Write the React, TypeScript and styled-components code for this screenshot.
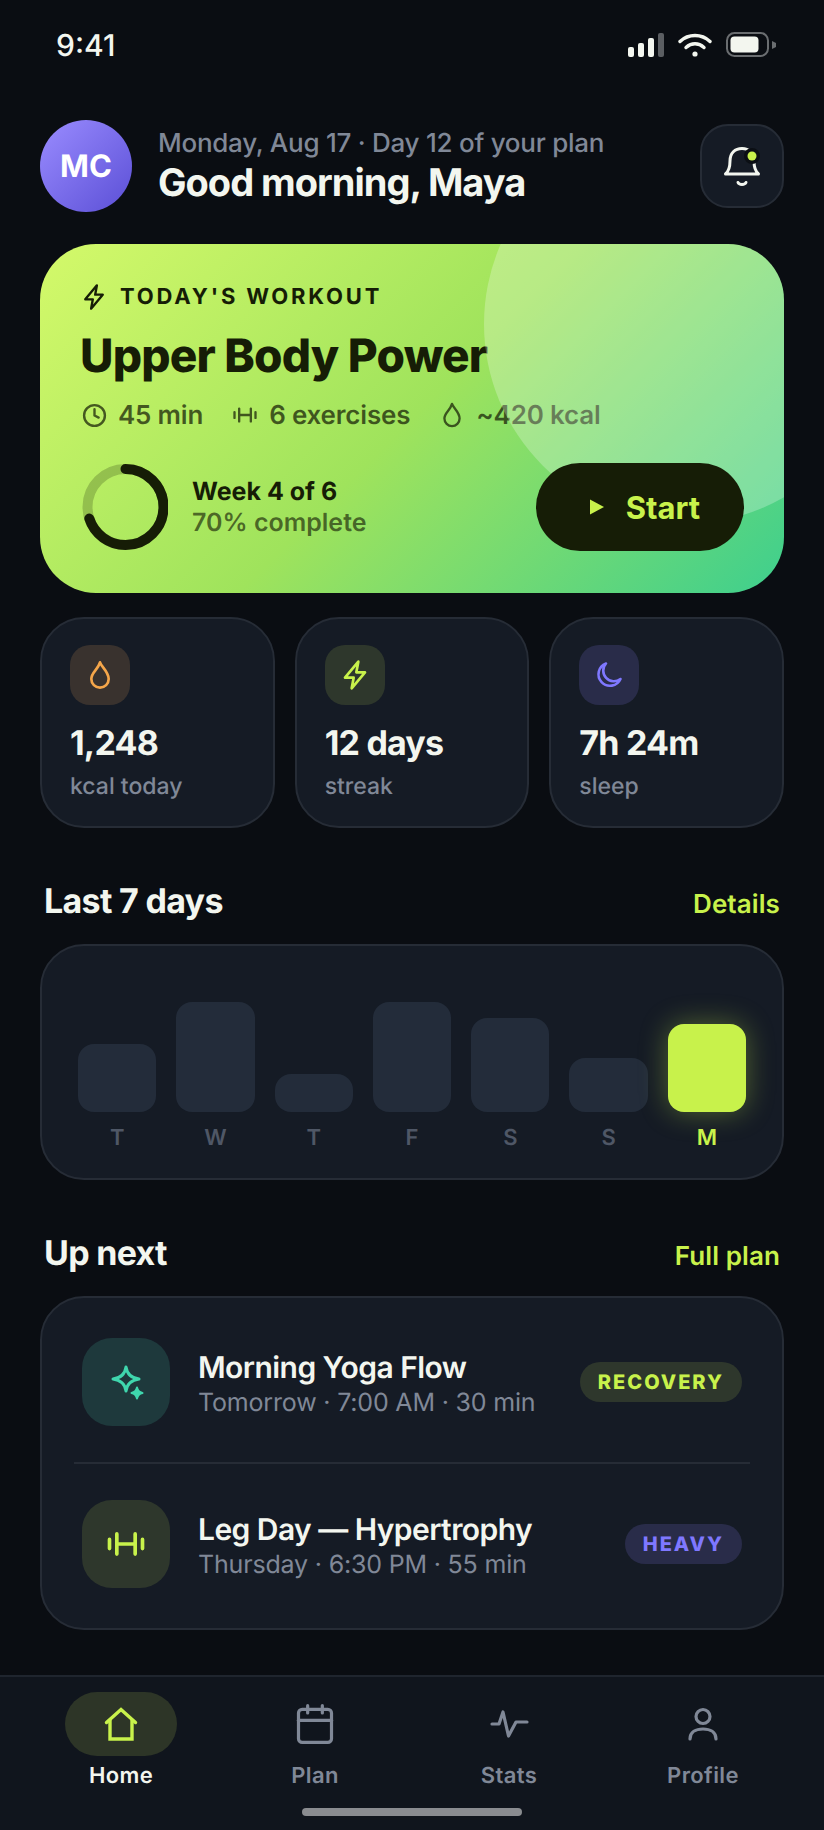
import { Calendar, Clock } from "lucide-react";
import styled, { createGlobalStyle } from "styled-components";

const LIME = "#c8f24b";
const MUTED = "#808897";

const GlobalStyle = createGlobalStyle`
  html, body {
    margin: 0;
    padding: 0;
    background: #0a0d12;
  }

  * {
    box-sizing: border-box;
  }

  body {
    font-family: Inter, "Liberation Sans", sans-serif;
    text-rendering: geometricPrecision;
    -webkit-font-smoothing: antialiased;
  }
`;

const weekBars = [
  { day: "T", height: 68 },
  { day: "W", height: 110 },
  { day: "T", height: 38 },
  { day: "F", height: 110 },
  { day: "S", height: 94 },
  { day: "S", height: 54 },
  { day: "M", height: 88, active: true },
];

function BoltIcon({ size = 28, color = "currentColor" }: { size?: number; color?: string }) {
  return (
    <svg width={size} height={size} viewBox="0 0 24 24" fill="none" stroke={color} strokeWidth="2" strokeLinejoin="round">
      <path d="M14.5 2L4.5 14H11L9.5 22L19.5 10H13Z" />
    </svg>
  );
}

function DropIcon({ size = 32, color = "currentColor" }: { size?: number; color?: string }) {
  return (
    <svg width={size} height={size} viewBox="0 0 24 24" fill="none" stroke={color} strokeWidth="2" strokeLinejoin="round">
      <path d="M12 2.5C13 6 18.5 9.5 18.5 15a6.5 6.5 0 0 1-13 0C5.5 10 10.5 8 12 2.5Z" />
    </svg>
  );
}

function BarbellIcon({ size = 28, color = "currentColor" }: { size?: number; color?: string }) {
  return (
    <svg width={size} height={size} viewBox="0 0 24 24" fill="none" stroke={color} strokeWidth="2" strokeLinecap="round">
      <path d="M3 9.5v5M7 6.5v11M17 6.5v11M21 9.5v5M7 12h10" />
    </svg>
  );
}

function MoonIcon() {
  return (
    <svg width="32" height="32" viewBox="0 0 32 32" fill="none" stroke="#7f78ff" strokeWidth="2.6" strokeLinejoin="round">
      <path d="M13 4.5A11.5 11.5 0 1 0 27.5 20A10.65 10.65 0 0 1 13 4.5Z" />
    </svg>
  );
}

function SparkleIcon() {
  return (
    <svg width="44" height="44" viewBox="0 0 44 44" fill="none" stroke="#3fd6ad" strokeWidth="3" strokeLinejoin="round">
      <path d="M22 7Q23.5 17.5 35 19Q23.5 20.5 22 31Q20.5 20.5 9 19Q20.5 17.5 22 7Z" />
      <path
        d="M33 27.5Q34 32 38.5 33Q34 34 33 38.5Q32 34 27.5 33Q32 32 33 27.5Z"
        fill="#3fd6ad"
        strokeWidth="2"
      />
    </svg>
  );
}

function BellIcon() {
  return (
    <svg width="44" height="44" viewBox="0 0 44 44" fill="none" stroke="#f3f6ef" strokeWidth="3" strokeLinecap="round" strokeLinejoin="round">
      <path d="M5.5 30C9 27 10 22 10 17C10 9 15 4.5 22 4.5C29 4.5 34 9 34 17C34 22 35 27 38.5 30H5.5Z" />
      <path d="M18 38.5C19 41 25 41 26 38.5" />
      <circle cx="32" cy="12" r="8" fill="#0b0f14" stroke="none" />
      <circle cx="32" cy="12" r="4.5" fill={LIME} stroke="none" />
    </svg>
  );
}

function ProgressRing() {
  return (
    <svg width="88" height="88" viewBox="0 0 88 88" fill="none" strokeWidth="10">
      <circle cx="45.5" cy="44" r="38" stroke="rgba(24, 32, 6, 0.22)" />
      <circle
        cx="45.5"
        cy="44"
        r="38"
        stroke="#161d06"
        strokeLinecap="round"
        strokeDasharray="167 239"
        transform="rotate(-90 45.5 44)"
      />
    </svg>
  );
}

function HomeIcon() {
  return (
    <svg width="44" height="44" viewBox="0 0 44 44" fill="none" stroke={LIME} strokeWidth="3.4" strokeLinecap="round">
      <path d="M7.5 20.5L22 7.5L36.5 20.5" strokeLinejoin="miter" />
      <path d="M11 17.5V37H33V17.5" strokeLinecap="butt" />
    </svg>
  );
}

function PulseIcon() {
  return (
    <svg width="44" height="44" viewBox="0 0 44 44" fill="none" stroke={MUTED} strokeWidth="3.2" strokeLinecap="round" strokeLinejoin="round">
      <path d="M5 22H12L16 10L21.5 34L29 20H40" />
    </svg>
  );
}

function PersonIcon() {
  return (
    <svg width="44" height="44" viewBox="0 0 44 44" fill="none" stroke={MUTED} strokeWidth="3.2" strokeLinecap="round">
      <circle cx="22" cy="14.5" r="7" />
      <path d="M9 37C9 30 15 27 22 27S35 30 35 37" />
    </svg>
  );
}

export default function App() {
  return (
    <Screen>
      <GlobalStyle />
      <Main>
        <StatusBar>
          <StatusTime>9:41</StatusTime>
          <StatusIcons>
            <svg width="36" height="26" viewBox="0 0 36 26">
              <rect x="0" y="15" width="6" height="10" rx="2" fill="#f3f6ef" />
              <rect x="10" y="11" width="6" height="14" rx="2" fill="#f3f6ef" />
              <rect x="20" y="6" width="6" height="19" rx="2" fill="#f3f6ef" />
              <rect x="30" y="1" width="6" height="24" rx="2" fill="#5b5e62" />
            </svg>
            <svg width="34" height="26" viewBox="0 0 34 26" fill="none" stroke="#f3f6ef" strokeWidth="3.4" strokeLinecap="round">
              <path d="M2 9.5C10.5 1.5 23.5 1.5 32 9.5" />
              <path d="M8 15.5C13.5 10.5 20.5 10.5 26 15.5" />
              <circle cx="17" cy="22" r="2.6" fill="#f3f6ef" stroke="none" />
            </svg>
            <svg width="50" height="26" viewBox="0 0 50 26">
              <rect x="1" y="1" width="41" height="23" rx="7.5" fill="none" stroke="#6a6d70" strokeWidth="2" />
              <rect x="4.5" y="4.5" width="28" height="16" rx="4" fill="#f3f6ef" />
              <path d="M46 9L50 11V15L46 17Z" fill="#6a6d70" />
            </svg>
          </StatusIcons>
        </StatusBar>

        <Header>
          <Avatar>MC</Avatar>
          <Greeting>
            <DateLine>Monday, Aug 17 · Day 12 of your plan</DateLine>
            <Hello>Good morning, Maya</Hello>
          </Greeting>
          <BellButton>
            <BellIcon />
          </BellButton>
        </Header>

        <Content>
          <Hero>
            <HeroLabel>
              <BoltIcon />
              TODAY&apos;S WORKOUT
            </HeroLabel>
            <HeroTitle>Upper Body Power</HeroTitle>
            <HeroMeta>
              <MetaItem>
                <ClockIcon size={25} strokeWidth={2.3} />
                45 min
              </MetaItem>
              <MetaItem>
                <BarbellIcon />
                6 exercises
              </MetaItem>
              <MetaItem>
                <DropIcon size={28} />
                ~420 kcal
              </MetaItem>
            </HeroMeta>
            <HeroFooter>
              <ProgressRing />
              <ProgressText>
                <WeekLine>Week 4 of 6</WeekLine>
                <PercentLine>70% complete</PercentLine>
              </ProgressText>
              <StartButton>
                <svg width="14" height="16" viewBox="0 0 14 16">
                  <path d="M0 0.5L14 8L0 15.5Z" fill={LIME} />
                </svg>
                Start
              </StartButton>
            </HeroFooter>
            <HeroCircle />
          </Hero>

          <StatGrid>
            <StatCard>
              <StatIcon $bg="#39322e">
                <DropIcon color="#f5a64a" />
              </StatIcon>
              <StatValue>1,248</StatValue>
              <StatLabel>kcal today</StatLabel>
            </StatCard>
            <StatCard>
              <StatIcon $bg="#2e372c">
                <BoltIcon size={32} color={LIME} />
              </StatIcon>
              <StatValue>12 days</StatValue>
              <StatLabel>streak</StatLabel>
            </StatCard>
            <StatCard>
              <StatIcon $bg="#292c49">
                <MoonIcon />
              </StatIcon>
              <StatValue>7h 24m</StatValue>
              <StatLabel>sleep</StatLabel>
            </StatCard>
          </StatGrid>

          <SectionHead>
            <SectionTitle>Last 7 days</SectionTitle>
            <SectionLink>Details</SectionLink>
          </SectionHead>
          <ChartCard>
            {weekBars.map((bar, index) => (
              <ChartColumn key={index}>
                <BarSlot>
                  <Bar $height={bar.height} $active={bar.active} />
                </BarSlot>
                <BarDay $active={bar.active}>{bar.day}</BarDay>
              </ChartColumn>
            ))}
          </ChartCard>

          <SectionHead>
            <SectionTitle>Up next</SectionTitle>
            <SectionLink>Full plan</SectionLink>
          </SectionHead>
          <ListCard>
            <ListRow>
              <RowIcon $bg="#1e393c">
                <SparkleIcon />
              </RowIcon>
              <RowText>
                <RowTitle>Morning Yoga Flow</RowTitle>
                <RowSub>Tomorrow · 7:00 AM · 30 min</RowSub>
              </RowText>
              <Badge $bg="#2e372c" $color={LIME}>RECOVERY</Badge>
            </ListRow>
            <ListRow>
              <RowIcon $bg="#2e372c">
                <BarbellIcon size={44} color={LIME} />
              </RowIcon>
              <RowText>
                <RowTitle>Leg Day — Hypertrophy</RowTitle>
                <RowSub>Thursday · 6:30 PM · 55 min</RowSub>
              </RowText>
              <Badge $bg="#292c49" $color="#7f78ff">HEAVY</Badge>
            </ListRow>
          </ListCard>
        </Content>
      </Main>

      <BottomNav>
        <NavItems>
          <NavItem>
            <NavPill $active>
              <HomeIcon />
            </NavPill>
            <NavLabel $active>Home</NavLabel>
          </NavItem>
          <NavItem>
            <NavPill>
              <Calendar size={44} strokeWidth={1.75} color={MUTED} />
            </NavPill>
            <NavLabel>Plan</NavLabel>
          </NavItem>
          <NavItem>
            <NavPill>
              <PulseIcon />
            </NavPill>
            <NavLabel>Stats</NavLabel>
          </NavItem>
          <NavItem>
            <NavPill>
              <PersonIcon />
            </NavPill>
            <NavLabel>Profile</NavLabel>
          </NavItem>
        </NavItems>
        <HomeIndicator />
      </BottomNav>
    </Screen>
  );
}

const Screen = styled.div`
  width: 824px;
  height: 1830px;
  display: flex;
  flex-direction: column;
  overflow: hidden;
  background: #0a0d12;
  color: #f3f6ef;
`;

const Main = styled.main`
  flex: 1;
`;

const StatusBar = styled.div`
  height: 90px;
  display: flex;
  align-items: center;
  justify-content: space-between;
  padding: 0 48px 0 56px;
`;

const StatusTime = styled.span`
  padding-top: 2px;
  font-size: 30px;
  font-weight: 500;
  line-height: 34px;
`;

const StatusIcons = styled.div`
  display: flex;
  align-items: center;
  gap: 14px;

  & > svg {
    display: block;
  }
`;

const Header = styled.header`
  margin-top: 30px;
  padding: 0 40px;
  display: flex;
  align-items: center;
`;

const Avatar = styled.div`
  width: 92px;
  height: 92px;
  flex-shrink: 0;
  display: flex;
  align-items: center;
  justify-content: center;
  border-radius: 50%;
  background: linear-gradient(135deg, #9a8cff, #5b4fd6);
  color: #fff;
  font-size: 31px;
  font-weight: 700;
`;

const Greeting = styled.div`
  flex: 1;
  margin-left: 26px;
  padding-top: 2px;
`;

const DateLine = styled.div`
  font-size: 26px;
  font-weight: 500;
  line-height: 32px;
  letter-spacing: -0.26px;
  color: ${MUTED};
`;

const Hello = styled.div`
  font-size: 38px;
  font-weight: 700;
  line-height: 46px;
  letter-spacing: -1px;
`;

const BellButton = styled.button`
  width: 84px;
  height: 84px;
  padding: 0;
  display: flex;
  align-items: center;
  justify-content: center;
  border: 2px solid #262c36;
  border-radius: 28px;
  background: #151b25;
`;

const Content = styled.div`
  padding: 32px 40px 0;
`;

const Hero = styled.section`
  position: relative;
  overflow: hidden;
  padding: 37px 40px 42px;
  border-radius: 56px;
  background: linear-gradient(135deg, #d4f96a 0%, #9fe35c 50%, #3ecf8e 100%);
  color: #161d06;
`;

const HeroCircle = styled.div`
  position: absolute;
  top: -120px;
  right: -100px;
  width: 400px;
  height: 400px;
  border-radius: 50%;
  background: rgba(255, 255, 255, 0.25);
`;

const HeroLabel = styled.div`
  display: flex;
  align-items: center;
  gap: 12px;
  height: 32px;
  font-size: 22px;
  font-weight: 700;
  letter-spacing: 2.8px;
`;

const HeroTitle = styled.h1`
  margin: 17px 0 0;
  font-size: 46px;
  font-weight: 800;
  line-height: 52px;
  letter-spacing: -0.8px;
`;

const HeroMeta = styled.div`
  margin-top: 17px;
  display: flex;
  gap: 28px;
  color: rgba(22, 29, 6, 0.72);
`;

const MetaItem = styled.div`
  display: flex;
  align-items: center;
  gap: 10px;
  height: 32px;
  font-size: 26px;
  font-weight: 600;
  letter-spacing: -0.2px;
`;

const ClockIcon = styled(Clock)`
  margin: 0 1px 0 2px;
`;

const HeroFooter = styled.div`
  margin-top: 32px;
  display: flex;
  align-items: center;
`;

const ProgressText = styled.div`
  flex: 1;
  margin-left: 24px;
  padding-top: 2px;
  font-size: 25px;
  line-height: 31px;
`;

const WeekLine = styled.div`
  font-weight: 700;
`;

const PercentLine = styled.div`
  font-weight: 600;
  color: rgba(22, 29, 6, 0.65);
`;

const StartButton = styled.button`
  position: relative;
  z-index: 1;
  width: 208px;
  height: 88px;
  display: flex;
  align-items: center;
  justify-content: center;
  gap: 22px;
  padding: 0 0 0 10px;
  border: 0;
  border-radius: 44px;
  background: #161d06;
  color: ${LIME};
  font-family: inherit;
  font-size: 31px;
  font-weight: 700;
`;

const StatGrid = styled.div`
  margin-top: 24px;
  display: grid;
  grid-template-columns: repeat(3, 1fr);
  gap: 20px;
`;

const StatCard = styled.div`
  padding: 26px 28px 25px;
  border: 2px solid #262c36;
  border-radius: 44px;
  background: #151b25;
`;

const StatIcon = styled.div<{ $bg: string }>`
  width: 60px;
  height: 60px;
  display: flex;
  align-items: center;
  justify-content: center;
  border-radius: 20px;
  background: ${(props) => props.$bg};
`;

const StatValue = styled.div`
  margin-top: 19px;
  font-size: 34px;
  font-weight: 700;
  line-height: 40px;
  letter-spacing: -0.8px;
`;

const StatLabel = styled.div`
  margin-top: 7px;
  font-size: 23px;
  font-weight: 500;
  line-height: 30px;
  color: ${MUTED};
`;

const SectionHead = styled.div`
  margin: 54px 4px 22px;
  display: flex;
  align-items: baseline;
  justify-content: space-between;
`;

const SectionTitle = styled.h2`
  margin: 0;
  font-size: 34px;
  font-weight: 700;
  line-height: 40px;
  letter-spacing: -0.7px;
`;

const SectionLink = styled.span`
  font-size: 26px;
  font-weight: 600;
  letter-spacing: 0.1px;
  color: ${LIME};
`;

const ChartCard = styled.div`
  display: grid;
  grid-template-columns: repeat(7, 1fr);
  column-gap: 20px;
  padding: 26px 36px;
  border: 2px solid #262c36;
  border-radius: 44px;
  background: #151b25;
`;

const ChartColumn = styled.div`
  display: flex;
  flex-direction: column;
  align-items: stretch;
`;

const BarSlot = styled.div`
  height: 140px;
  display: flex;
  align-items: flex-end;
`;

const Bar = styled.div<{ $height: number; $active?: boolean }>`
  width: 100%;
  height: ${(props) => props.$height}px;
  border-radius: 16px;
  background: ${(props) => (props.$active ? LIME : "#232c3a")};
  box-shadow: ${(props) => (props.$active ? "0 0 28px rgba(200, 242, 75, 0.35)" : "none")};
`;

const BarDay = styled.div<{ $active?: boolean }>`
  margin-top: 12px;
  font-size: 22px;
  font-weight: 600;
  line-height: 28px;
  text-align: center;
  color: ${(props) => (props.$active ? LIME : "#4f5766")};
`;

const ListCard = styled.div`
  padding: 4px 32px;
  border: 2px solid #262c36;
  border-radius: 44px;
  background: #151b25;
`;

const ListRow = styled.div`
  display: flex;
  align-items: center;
  padding: 36px 8px;

  & + & {
    border-top: 2px solid #262c36;
  }
`;

const RowIcon = styled.div<{ $bg: string }>`
  width: 88px;
  height: 88px;
  flex-shrink: 0;
  display: flex;
  align-items: center;
  justify-content: center;
  border-radius: 30px;
  background: ${(props) => props.$bg};
`;

const RowText = styled.div`
  flex: 1;
  margin-left: 28px;
  padding-top: 4px;
`;

const RowTitle = styled.div`
  font-size: 30px;
  font-weight: 600;
  line-height: 38px;
  letter-spacing: -0.55px;
`;

const RowSub = styled.div`
  font-size: 25px;
  font-weight: 400;
  line-height: 33px;
  letter-spacing: -0.18px;
  color: ${MUTED};
`;

const Badge = styled.span<{ $bg: string; $color: string }>`
  height: 40px;
  display: flex;
  align-items: center;
  padding: 0 18px;
  border-radius: 20px;
  background: ${(props) => props.$bg};
  color: ${(props) => props.$color};
  font-size: 20px;
  font-weight: 800;
  letter-spacing: 2px;
`;

const BottomNav = styled.nav`
  height: 155px;
  flex-shrink: 0;
  display: flex;
  flex-direction: column;
  align-items: center;
  padding-top: 15px;
  border-top: 2px solid #1f252e;
  background: #10151d;
`;

const NavItems = styled.div`
  width: 100%;
  padding: 0 24px;
  display: grid;
  grid-template-columns: repeat(4, 1fr);
`;

const NavItem = styled.div`
  display: flex;
  flex-direction: column;
  align-items: center;
`;

const NavPill = styled.div<{ $active?: boolean }>`
  width: 112px;
  height: 64px;
  display: flex;
  align-items: center;
  justify-content: center;
  border-radius: 32px;
  background: ${(props) => (props.$active ? "#2d3527" : "transparent")};
`;

const NavLabel = styled.span<{ $active?: boolean }>`
  margin-top: 6px;
  font-size: 22px;
  font-weight: 600;
  line-height: 28px;
  letter-spacing: 0.4px;
  color: ${(props) => (props.$active ? "#f3f6ef" : MUTED)};
`;

const HomeIndicator = styled.div`
  width: 220px;
  height: 8px;
  margin-top: 18px;
  border-radius: 4px;
  background: #8a8c90;
`;
